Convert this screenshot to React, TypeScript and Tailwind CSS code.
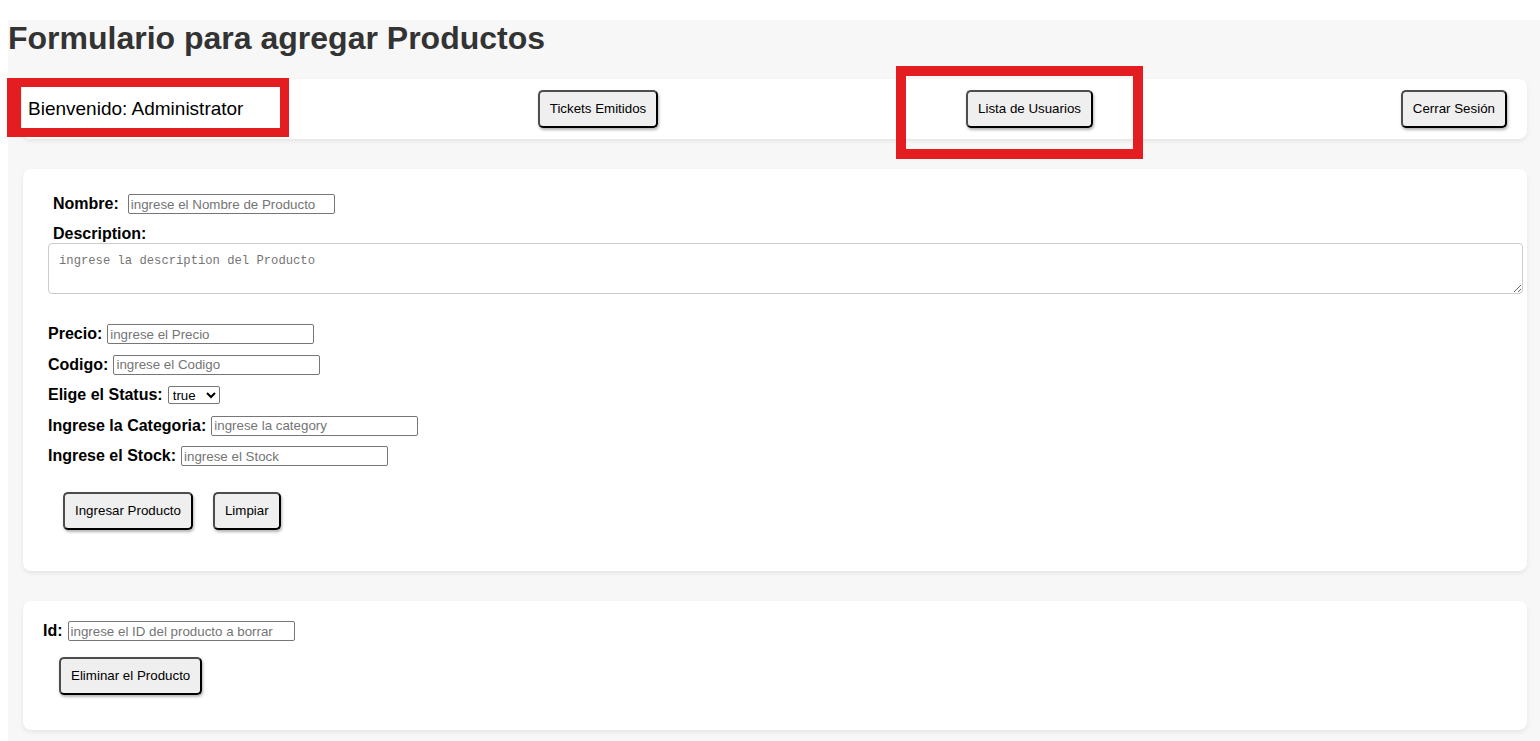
const btn =
  "h-[38px] px-[10px] border-2 border-[#4d4d4d] border-r-black border-b-black rounded-[5px] bg-[#efefef] text-[13.33px] text-black shadow-[1px_2px_3px_rgba(0,0,0,0.3)] whitespace-nowrap";

const input =
  "h-[20px] border border-[#767676] rounded-[2px] px-[2px] text-[13.33px] text-black bg-white placeholder:text-[#757575] outline-none";

const label = "text-[16px] font-bold text-black leading-[18px] whitespace-nowrap";

/* ── Fila label + campo ── */
function Field({
  name,
  placeholder,
  gap = "gap-[5px]",
  width = "w-[207px]",
}: {
  name: string;
  placeholder: string;
  gap?: string;
  width?: string;
}) {
  return (
    <div className={`flex items-center h-[20px] ${gap}`}>
      <label className={label}>{name}</label>
      <input className={`${input} ${width}`} placeholder={placeholder} />
    </div>
  );
}

export default function App() {
  return (
    <div className="relative min-h-screen bg-white pt-[20px] pl-[8px] font-['Liberation_Sans',Arial,sans-serif]">
      <div className="bg-[#f7f7f7] min-h-[721px] pb-[20px]">
        <h1 className="text-[32px] font-bold text-[#333] leading-[37px]">
          Formulario para agregar Productos
        </h1>

        {/* Header */}
        <div className="mt-[22px] ml-[14px] mr-[13px] h-[60px] bg-white rounded-[8px] shadow-[0_2px_4px_rgba(0,0,0,0.08)] flex items-center justify-between pl-[6px] pr-[20px]">
          <span className="w-[202px] whitespace-nowrap text-[19px] text-black">
            Bienvenido: Administrator
          </span>
          <button className={btn}>Tickets Emitidos</button>
          <button className={btn}>Lista de Usuarios</button>
          <button className={btn}>Cerrar Sesión</button>
        </div>

        {/* Formulario */}
        <div className="mt-[30px] ml-[15px] mr-[13px] bg-white rounded-[8px] shadow-[0_2px_4px_rgba(0,0,0,0.08)] pt-[25px] pb-[41px] pl-[25px] pr-[4px]">
          <div className="pl-[5px]">
            <Field name="Nombre:" placeholder="ingrese el Nombre de Producto" gap="gap-[9px]" />
            <div className={`${label} mt-[11px]`}>Description:</div>
          </div>
          <textarea
            rows={2}
            className="block w-full h-[51px] border border-[#cccccc] rounded-[4px] p-[10px] font-['Liberation_Mono',monospace] text-[12.2px] leading-[15px] text-black placeholder:text-[#757575] outline-none"
            placeholder="ingrese la description del Producto"
          />

          <div className="mt-[30px] flex flex-col gap-[10.5px]">
            <Field name="Precio:" placeholder="ingrese el Precio" />
            <Field name="Codigo:" placeholder="ingrese el Codigo" />
            <div className="flex items-center gap-[5px] h-[20px]">
              <label className={label}>Elige el Status:</label>
              <select className="w-[52px] h-[18px] border border-[#767676] rounded-[2px] bg-white text-[13.33px] text-black">
                <option>true</option>
                <option>false</option>
              </select>
            </div>
            <Field name="Ingrese la Categoria:" placeholder="ingrese la category" />
            <Field name="Ingrese el Stock:" placeholder="ingrese el Stock" />
          </div>

          <div className="mt-[26px] ml-[15px] flex gap-[20px]">
            <button className={btn}>Ingresar Producto</button>
            <button className={btn}>Limpiar</button>
          </div>
        </div>

        {/* Eliminar */}
        <div className="mt-[30px] ml-[15px] mr-[13px] bg-white rounded-[8px] shadow-[0_2px_4px_rgba(0,0,0,0.08)] pt-[20px] pb-[35px] pl-[20px]">
          <Field name="Id:" placeholder="ingrese el ID del producto a borrar" width="w-[227px]" />
          <div className="mt-[16px] ml-[16px]">
            <button className={btn}>Eliminar el Producto</button>
          </div>
        </div>
      </div>

      {/* Marcas rojas */}
      <div className="absolute left-[7px] top-[78px] w-[282px] h-[59px] border-[#e41e20] border-l-[14px] border-t-[9px] border-r-[9px] border-b-[9px] pointer-events-none" />
      <div className="absolute left-[896px] top-[66px] w-[247px] h-[93px] border-[10px] border-[#e41e20] pointer-events-none" />
    </div>
  );
}
